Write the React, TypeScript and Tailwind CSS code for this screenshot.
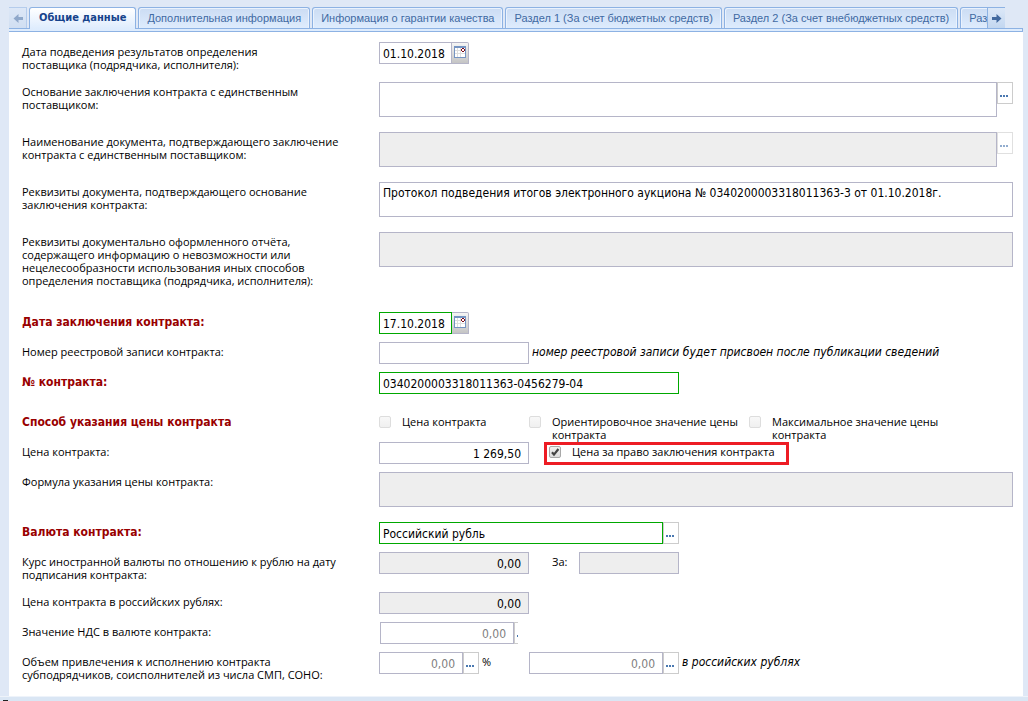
import { useId, useState, type ReactNode } from 'react';
import clsx from 'clsx';

const TABS = [
  'Общие данные',
  'Дополнительная информация',
  'Информация о гарантии качества',
  'Раздел 1 (За счет бюджетных средств)',
  'Раздел 2 (За счет внебюджетных средств)',
  'Раздел 3',
];

const LABEL_FONT = "font-['Open_Sans','DejaVu_Sans_Condensed',sans-serif] text-[11px] leading-[13px]";
const VALUE_FONT = "font-['DejaVu_Sans_Condensed','DejaVu_Sans',sans-serif] text-[12px]";

interface RowProps {
  label: string;
  htmlFor?: string;
  required?: boolean;
  height?: string;
  children: ReactNode;
}

function Row({ label, htmlFor, required, height = 'min-h-[30px]', children }: RowProps) {
  return (
    <div className={clsx('flex items-start', height)}>
      <label
        htmlFor={htmlFor}
        className={clsx(
          'w-[357px] shrink-0 whitespace-pre-line',
          required
            ? "pt-[4px] font-['DejaVu_Sans_Condensed',sans-serif] text-[12px] font-bold leading-[13px] text-[#990000]"
            : ['pt-[3px]', LABEL_FONT],
        )}
      >
        {label}
      </label>
      <div className="flex min-w-0 flex-1 items-start">{children}</div>
    </div>
  );
}

interface FieldProps {
  id?: string;
  value?: string;
  width: string;
  right?: boolean;
  valid?: boolean;
  readOnly?: boolean;
  muted?: boolean;
  ariaLabel?: string;
}

function Field({ id, value = '', width, right, valid, readOnly, muted, ariaLabel }: FieldProps) {
  return (
    <input
      id={id}
      type="text"
      defaultValue={value}
      readOnly={readOnly}
      aria-label={ariaLabel}
      className={clsx(
        'h-[22px] shrink-0 rounded-none border pl-[3px] pt-[2px] outline-none',
        VALUE_FONT,
        width,
        right ? 'pr-[7px] text-right' : 'pr-[3px]',
        valid ? 'border-[#00a800]' : 'border-[#b5b5c8]',
        readOnly ? 'bg-[#eeeeee]' : 'bg-white',
        muted ? 'text-[#808080]' : 'text-black',
      )}
    />
  );
}

function Area({ id, value = '', readOnly }: { id: string; value?: string; readOnly?: boolean }) {
  return (
    <textarea
      id={id}
      defaultValue={value}
      readOnly={readOnly}
      className={clsx(
        'block h-[35px] min-w-0 flex-1 resize-none rounded-none border border-[#b5b5c8] px-[3px] pt-[4px] leading-[13px] outline-none',
        VALUE_FONT,
        readOnly ? 'bg-[#eeeeee]' : 'bg-white',
      )}
    />
  );
}

function PickButton({ disabled }: { disabled?: boolean }) {
  return (
    <button
      type="button"
      disabled={disabled}
      aria-label="Выбрать"
      className="h-[22px] w-[16px] shrink-0 border border-[#cccccc] bg-white disabled:opacity-60"
    >
      <svg width="14" height="20" viewBox="0 0 14 20" fill="#4a78b0" shapeRendering="crispEdges" className="block">
        <rect x="2" y="12" width="2" height="2" />
        <rect x="5" y="12" width="2" height="2" />
        <rect x="8" y="12" width="2" height="2" />
      </svg>
    </button>
  );
}

function DateField({ id, value, valid }: { id: string; value: string; valid?: boolean }) {
  return (
    <>
      <Field id={id} value={value} width="w-[73px]" valid={valid} />
      <button
        type="button"
        aria-label="Календарь"
        className="h-[22px] w-[17px] shrink-0 rounded-tr-[2px] border-y border-r border-[#b5b5c8] bg-linear-to-b from-[#f5f5f5] to-[#c4c4c4]"
      >
        <svg width="16" height="20" viewBox="0 0 16 20" shapeRendering="crispEdges" className="block">
          <rect x="2" y="3" width="12" height="12" fill="#7594c2" />
          <rect x="3" y="5" width="10" height="9" fill="#fff" />
          <path d="M5.5 5v9M8.5 5v9M3 7.5h10M3 10.5h10" stroke="#dedede" />
          <rect x="9" y="5" width="4" height="5" fill="#fff" />
          <path d="M10 5h2v1h1v2h-1v1h-2v-1h-1v-2h1z" fill="#7c0a16" />
          <rect x="10" y="6" width="2" height="2" fill="#fff" />
        </svg>
      </button>
    </>
  );
}

interface TickProps {
  label: string;
  checked?: boolean;
  disabled?: boolean;
}

function Tick({ label, checked, disabled }: TickProps) {
  const id = useId();
  const [on, setOn] = useState(!!checked);
  return (
    <div className="flex items-start">
      <span className="relative mr-[11px] mt-px block size-[12px] shrink-0">
        <input
          id={id}
          type="checkbox"
          checked={on}
          disabled={disabled}
          onChange={(e) => setOn(e.target.checked)}
          className={clsx(
            'block size-[12px] appearance-none rounded-[2px] border bg-linear-to-b',
            disabled ? 'border-[#dddddd] from-[#f8f8f8] to-[#f0f0f0]' : 'border-[#a8a8a8] from-[#f0f0f0] to-[#dcdcdc]',
          )}
        />
        {on && (
          <svg viewBox="0 0 12 12" className="pointer-events-none absolute inset-0 size-[12px]">
            <path d="M3 6.2 5 8.6 9.4 3" fill="none" stroke="#444" strokeWidth="2.2" />
          </svg>
        )}
      </span>
      <label htmlFor={id} className={clsx('whitespace-pre-line', LABEL_FONT)}>
        {label}
      </label>
    </div>
  );
}

function Note({ children }: { children: ReactNode }) {
  return (
    <span className="pl-[3px] pt-[4px] font-['DejaVu_Sans_Condensed',sans-serif] text-[12px] italic leading-[13px]">
      {children}
    </span>
  );
}

function ScrollArrow({ className }: { className?: string }) {
  return (
    <svg width="10" height="9" viewBox="0 0 10 9" fill="#42699f" className={className}>
      <path d="M0 3h4.5V0L9.5 4.5 4.5 9V6H0z" />
    </svg>
  );
}

function TabStrip() {
  const [active, setActive] = useState(0);
  return (
    <div className="flex h-[29px] items-end pt-[7px]">
      <button
        type="button"
        disabled
        aria-label="Назад"
        className="flex h-[21px] w-[18px] shrink-0 items-center justify-center self-start border-r border-t border-[#8db2e3] bg-linear-to-b from-[#dce8f8] to-[#c3d7f0] opacity-50"
      >
        <ScrollArrow className="rotate-180" />
      </button>
      <div role="tablist" className="relative z-10 flex min-w-0 flex-1 items-start gap-[2px] self-stretch overflow-hidden pl-[2px]">
        {TABS.map((t, i) => (
          <button
            key={t}
            type="button"
            role="tab"
            aria-selected={i === active}
            onClick={() => setActive(i)}
            className={clsx(
              'shrink-0 whitespace-nowrap rounded-t-[3px] border border-b-0 border-[#8db2e3] text-[11px]',
              i === active
                ? "h-[22px] bg-linear-to-b from-white to-[#deecfd] px-[9px] font-['DejaVu_Sans_Condensed',sans-serif] font-bold text-[#15428b]"
                : "h-[21px] bg-linear-to-b from-[#cbdcf3] to-[#deecfd] px-[8px] font-['Liberation_Sans',sans-serif] text-[#416aa3] shadow-[inset_1px_1px_0_#eaf2fd,inset_-1px_0_0_#eaf2fd]",
            )}
          >
            {t}
          </button>
        ))}
      </div>
      <button
        type="button"
        aria-label="Вперёд"
        className="mr-[18px] flex h-[21px] w-[18px] shrink-0 items-center justify-center self-start border-l border-t border-[#8db2e3] bg-linear-to-b from-[#dce8f8] to-[#c3d7f0]"
      >
        <ScrollArrow />
      </button>
    </div>
  );
}

export default function App() {
  return (
    <div className="flex min-h-screen flex-col bg-[#dfe8f6] text-black">
      <div className="ml-[9px] mr-[5px] flex flex-1 flex-col">
        <TabStrip />
        {/* the active tab overlaps the top border of this band */}
        <div className="-mt-px h-[4px] border border-l-0 border-[#8db2e3] bg-[#deecfd]" />
        <form className="flex-1 bg-white pl-[13px] pr-[10px] pt-[10px]">
          <Row
            label={'Дата подведения результатов определения\nпоставщика (подрядчика, исполнителя):'}
            htmlFor="resultDate"
            height="min-h-[40px]"
          >
            <DateField id="resultDate" value="01.10.2018" />
          </Row>
          <Row
            label={'Основание заключения контракта с единственным\nпоставщиком:'}
            htmlFor="basis"
            height="min-h-[50px]"
          >
            <Area id="basis" />
            <PickButton />
          </Row>
          <Row
            label={'Наименование документа, подтверждающего заключение\nконтракта с единственным поставщиком:'}
            htmlFor="docName"
            height="min-h-[50px]"
          >
            <Area id="docName" readOnly />
            <PickButton disabled />
          </Row>
          <Row
            label={'Реквизиты документа, подтверждающего основание\nзаключения контракта:'}
            htmlFor="docDetails"
            height="min-h-[50px]"
          >
            <Area
              id="docDetails"
              value="Протокол подведения итогов электронного аукциона № 0340200003318011363-3 от 01.10.2018г."
            />
          </Row>
          <Row
            label={
              'Реквизиты документально оформленного отчёта,\nсодержащего информацию о невозможности или\nнецелесообразности использования иных способов\nопределения поставщика (подрядчика, исполнителя):'
            }
            htmlFor="report"
            height="min-h-[80px]"
          >
            <Area id="report" readOnly />
          </Row>
          <Row label="Дата заключения контракта:" htmlFor="signDate" required>
            <DateField id="signDate" value="17.10.2018" valid />
          </Row>
          <Row label="Номер реестровой записи контракта:" htmlFor="regNumber">
            <Field id="regNumber" width="w-[150px]" />
            <Note>номер реестровой записи будет присвоен после публикации сведений</Note>
          </Row>
          <Row label="№ контракта:" htmlFor="number" required height="min-h-[40px]">
            <Field id="number" value="0340200003318011363-0456279-04" width="w-[300px]" valid />
          </Row>
          <Row label="Способ указания цены контракта" required>
            <div className="flex h-[30px] pt-[3px]">
              <div className="w-[150px]">
                <Tick label="Цена контракта" disabled />
              </div>
              <div className="w-[220px]">
                <Tick label={'Ориентировочное значение цены\nконтракта'} disabled />
              </div>
              <Tick label={'Максимальное значение цены\nконтракта'} disabled />
            </div>
          </Row>
          <Row label="Цена контракта:" htmlFor="price">
            <Field id="price" value="1 269,50" width="w-[150px]" right />
            <div className="ml-[15px] w-[245px] border-[3px] border-[#ed1c24] pb-[4px] pl-[2px]">
              <Tick label="Цена за право заключения контракта" checked />
            </div>
          </Row>
          <Row label="Формула указания цены контракта:" htmlFor="formula" height="min-h-[50px]">
            <Area id="formula" readOnly />
          </Row>
          <Row label="Валюта контракта:" htmlFor="currency" required>
            <Field id="currency" value="Российский рубль" width="w-[284px]" valid />
            <PickButton />
          </Row>
          <Row
            label={'Курс иностранной валюты по отношению к рублю на дату\nподписания контракта:'}
            htmlFor="rate"
            height="min-h-[40px]"
          >
            <Field id="rate" value="0,00" width="w-[150px]" right readOnly />
            <label htmlFor="per" className={clsx('w-[50px] pl-[23px] pt-[3px]', LABEL_FONT)}>
              За:
            </label>
            <Field id="per" width="w-[100px]" readOnly />
          </Row>
          <Row label="Цена контракта в российских рублях:" htmlFor="priceRub">
            <Field id="priceRub" value="0,00" width="w-[150px]" right readOnly />
          </Row>
          <Row label="Значение НДС в валюте контракта:" htmlFor="vat">
            <div className="flex w-[139px] overflow-hidden pl-px">
              <Field id="vat" value="0,00" width="w-[134px]" right muted />
              <PickButton />
            </div>
          </Row>
          <Row
            label={'Объем привлечения к исполнению контракта\nсубподрядчиков, соисполнителей из числа СМП, СОНО:'}
            htmlFor="share"
            height="min-h-[44px]"
          >
            <div className="flex w-[150px]">
              <Field id="share" value="0,00" width="w-[84px]" right muted />
              <PickButton />
              <span className={clsx('pl-[3px] pt-[3px]', LABEL_FONT)}>%</span>
            </div>
            <Field value="0,00" width="w-[134px]" right muted ariaLabel="Объем в российских рублях" />
            <PickButton />
            <Note>в российских рублях</Note>
          </Row>
        </form>
      </div>
      <div className="h-[5px] border-t border-[#eef3fa] bg-[#dae6f4]">
        <div className="ml-[3px] mt-[3px] h-px w-[5px] bg-[#222]" />
      </div>
    </div>
  );
}
